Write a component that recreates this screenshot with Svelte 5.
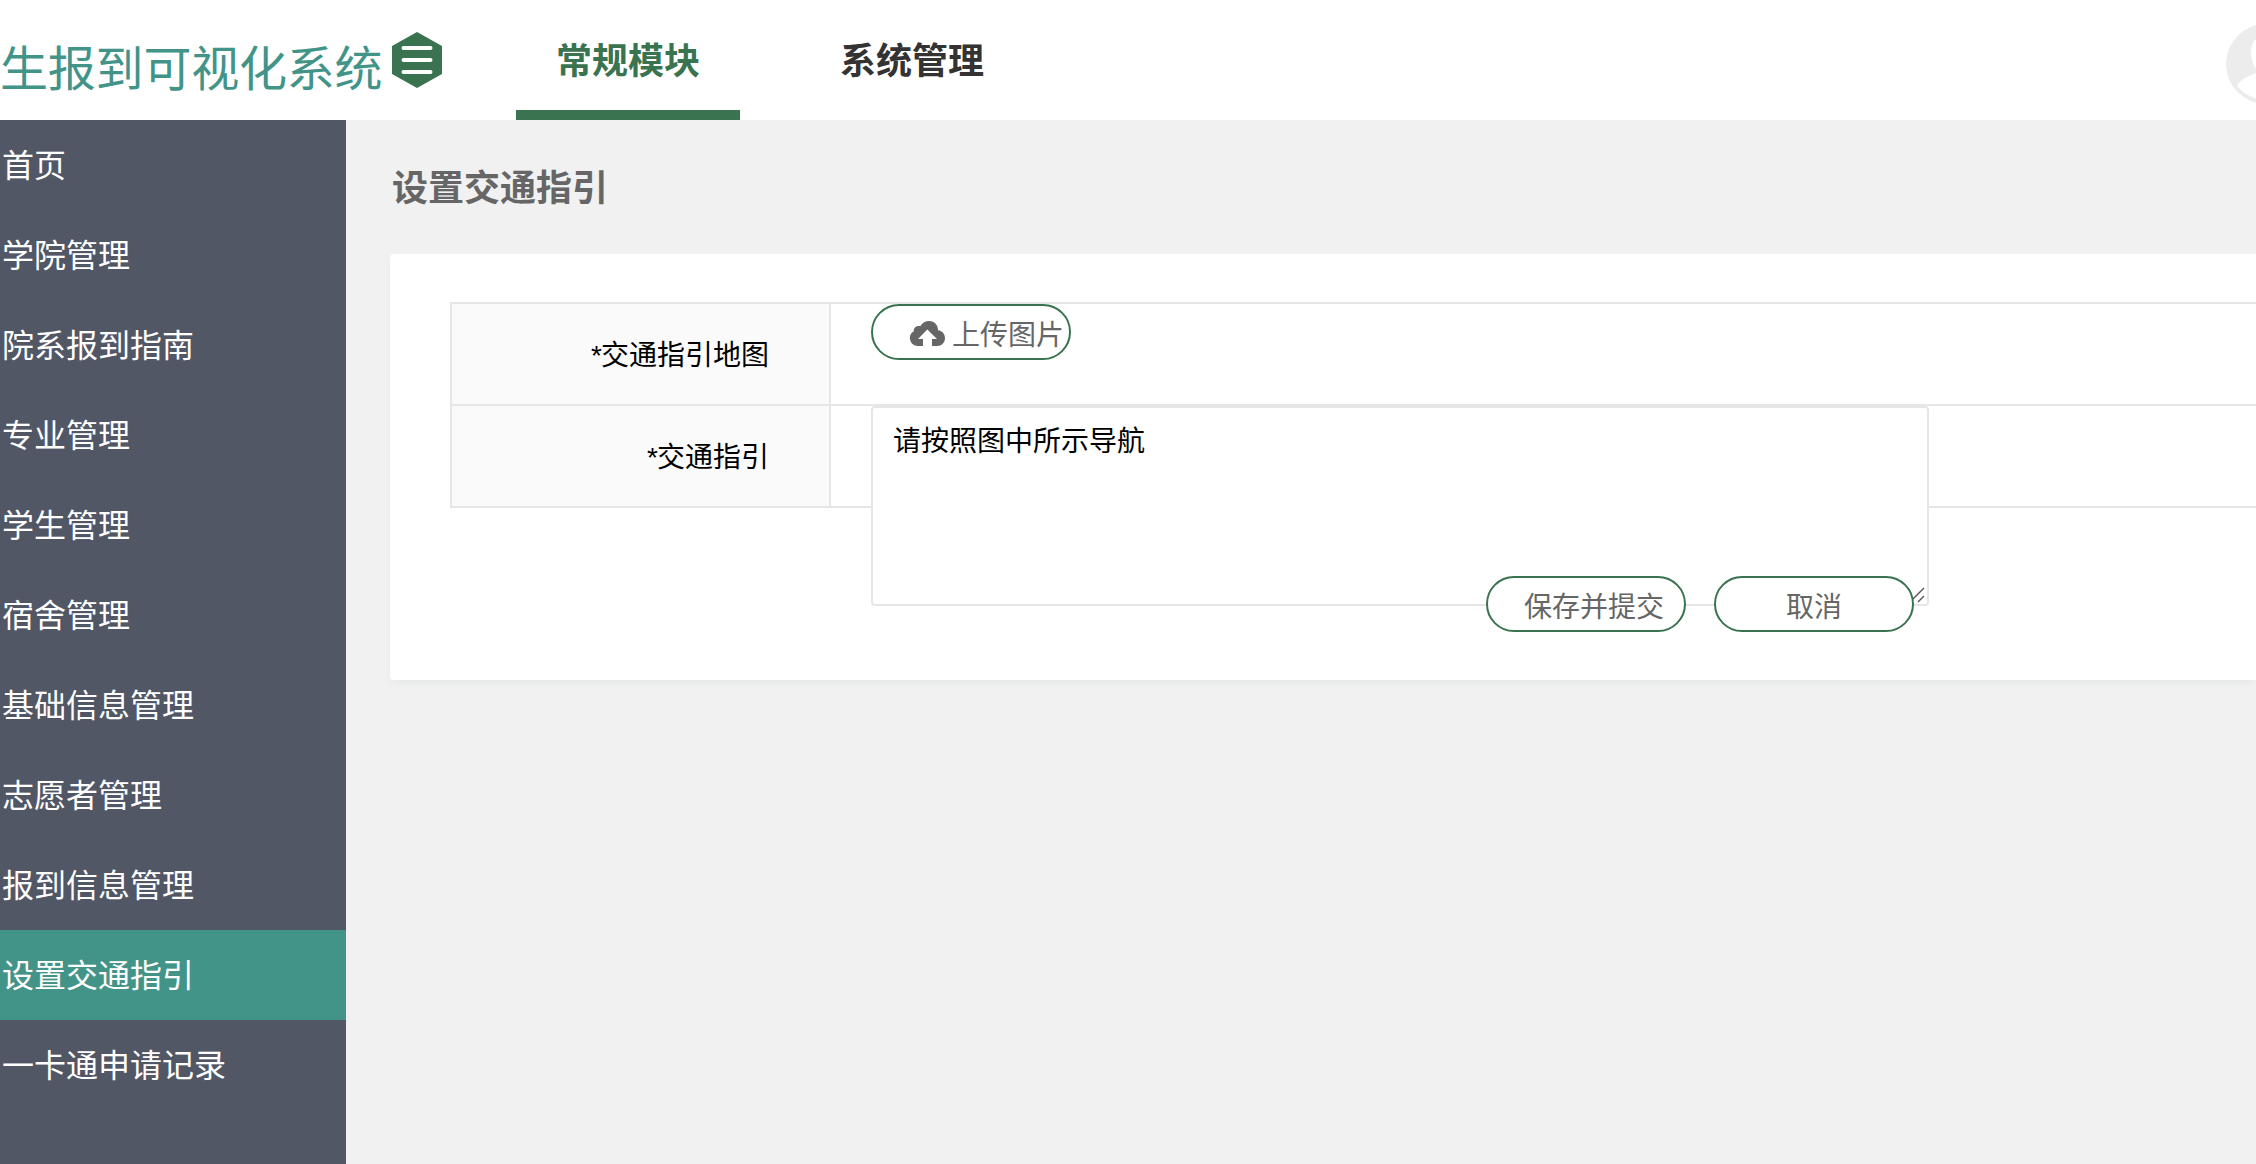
<script lang="ts">
  interface MenuItem {
    name: string;
    active?: boolean;
  }

  const modules: MenuItem[] = [
    { name: '常规模块', active: true },
    { name: '系统管理' },
  ];

  const menus: MenuItem[] = [
    { name: '首页' },
    { name: '学院管理' },
    { name: '院系报到指南' },
    { name: '专业管理' },
    { name: '学生管理' },
    { name: '宿舍管理' },
    { name: '基础信息管理' },
    { name: '志愿者管理' },
    { name: '报到信息管理' },
    { name: '设置交通指引', active: true },
    { name: '一卡通申请记录' },
  ];

  let guide = $state('请按照图中所示导航');
</script>

<div class="layout">
  <header>
    <div class="logo">生报到可视化系统</div>
    <svg class="toggle" viewBox="0 0 50 56" width="50" height="56">
      <path d="M25 0 L50 14 V42 L25 56 L0 42 V14 Z" fill="#3a7350" />
      <path d="M11.5 16 H38.5 M11.5 28 H38.5 M11.5 40 H38.5" stroke="#fff" stroke-width="4" stroke-linecap="round" />
    </svg>
    <nav>
      {#each modules as item}
        <div class="module" class:active={item.active}>{item.name}</div>
      {/each}
    </nav>
    <svg class="avatar" viewBox="0 0 80 80" width="80" height="80">
      <circle cx="40" cy="40" r="40" fill="#ececec" />
      <path d="M11 62 C15 54 24 52 32 48 C28 43 25 36 25 28 C25 18 31 11 40 11 C49 11 55 18 55 28 C55 36 52 43 48 48 C56 52 65 54 69 62 A37.5 37.5 0 0 1 11 62 Z" fill="#fff" />
    </svg>
  </header>

  <div class="body">
    <aside>
      {#each menus as item}
        <div class="menu" class:active={item.active}>{item.name}</div>
      {/each}
    </aside>

    <main>
      <h2>设置交通指引</h2>
      <section class="card">
        <div class="table">
          <div class="row">
            <div class="label"><span class="star">*</span>交通指引地图</div>
            <div class="value">
              <button class="btn">
                <svg class="cloud" viewBox="0 0 36 25" width="36" height="25">
                  <path d="M8 25 A8 8 0 0 1 4.8 10.2 C4.4 6.4 8 4.3 11.2 5.2 C13.2 1.8 16.5 0 20.2 0 C25.4 0 29 4 29 9.2 C33.2 9.8 36 12.8 36 17 C36 21.6 32.6 25 28 25 H23 V18 H28 L18.3 8.5 L9 18 H14 V25 Z" fill="#666" />
                </svg>
                上传图片
              </button>
            </div>
          </div>
          <div class="row">
            <div class="label"><span class="star">*</span>交通指引</div>
            <div class="value">
              <div class="editor">
                <textarea bind:value={guide} spellcheck="false"></textarea>
                <svg class="grip" viewBox="0 0 14 16" width="14" height="16">
                  <path d="M0 13 L12 1 M6 15 L12 9" stroke="#555" stroke-width="1.4" fill="none" />
                </svg>
              </div>
            </div>
          </div>
        </div>
        <div class="actions">
          <button class="btn">保存并提交</button>
          <button class="btn cancel">取消</button>
        </div>
      </section>
    </main>
  </div>
</div>

<style>
  :global(body) {
    margin: 0;
    overflow: hidden;
    font-family: "Noto Sans CJK SC", sans-serif;
  }

  .layout {
    display: flex;
    flex-direction: column;
    width: 100vw;
    height: 100vh;
    overflow: hidden;
    background: #f1f1f1;
  }

  header {
    display: flex;
    flex: none;
    height: 120px;
    background: #fff;
  }

  .logo {
    flex: none;
    width: 392px;
    font-size: 48px;
    line-height: 130px;
    letter-spacing: -0.2px;
    color: #439488;
    white-space: nowrap;
  }

  .toggle {
    flex: none;
    margin-top: 32px;
  }

  nav {
    display: flex;
    flex: 1;
    gap: 60px;
    margin-left: 74px;
  }

  .module {
    box-sizing: border-box;
    width: 224px;
    height: 120px;
    font-size: 36px;
    font-weight: bold;
    line-height: 117px;
    text-align: center;
    color: #333;
  }

  .module.active {
    color: #3a7350;
    border-bottom: 10px solid #3a7350;
  }

  .avatar {
    flex: none;
    margin: 24px -50px 0 0;
  }

  .body {
    display: flex;
    flex: 1;
    min-height: 0;
  }

  aside {
    flex: none;
    width: 346px;
    background: #525766;
  }

  .menu {
    box-sizing: border-box;
    height: 90px;
    padding-left: 2px;
    font-size: 32px;
    line-height: 86px;
    color: #fff;
  }

  .menu.active {
    background: #439488;
  }

  main {
    flex: 1;
    min-width: 0;
    padding-left: 44px;
  }

  h2 {
    margin: 0;
    padding-left: 2px;
    height: 134px;
    font-size: 36px;
    line-height: 131px;
    color: #666;
  }

  .card {
    box-sizing: border-box;
    height: 426px;
    padding: 48px 0 0 60px;
    border-radius: 4px 0 0 4px;
    background: #fff;
    box-shadow: 0 4px 8px -2px rgba(0, 80, 60, 0.06);
  }

  .table {
    border: 2px solid #e6e6e6;
    border-right: none;
  }

  .row {
    display: flex;
    height: 100px;
  }

  .row + .row {
    border-top: 2px solid #e6e6e6;
  }

  .label {
    box-sizing: border-box;
    flex: none;
    width: 379px;
    padding-right: 60px;
    border-right: 2px solid #e6e6e6;
    background: #fafafa;
    font-size: 28px;
    line-height: 98px;
    text-align: right;
    color: #000;
  }

  .star {
    margin-right: -1px;
    font-family: "Liberation Sans", sans-serif;
  }

  .value {
    padding-left: 40px;
  }

  .btn {
    display: flex;
    align-items: center;
    box-sizing: border-box;
    width: 200px;
    height: 56px;
    padding: 2px 0 0 36px;
    border: 2px solid #3a7350;
    border-radius: 28px;
    background: #fff;
    font-family: inherit;
    font-size: 28px;
    color: #666;
    white-space: nowrap;
  }

  .cloud {
    flex: none;
    margin-right: 7px;
  }

  .cancel {
    justify-content: center;
    padding: 2px 0 0;
  }

  .editor {
    position: relative;
    width: 1058px;
    height: 200px;
  }

  textarea {
    display: block;
    box-sizing: border-box;
    width: 100%;
    height: 100%;
    padding: 10px 20px;
    border: 2px solid #e6e6e6;
    border-radius: 4px;
    background: #fff;
    font-family: inherit;
    font-size: 28px;
    line-height: 42px;
    color: #000;
    resize: none;
    outline: none;
  }

  .grip {
    position: absolute;
    right: 3px;
    bottom: 3px;
  }

  /* the buttons sit on top of the textarea's lower edge */
  .actions {
    position: relative;
    display: flex;
    gap: 28px;
    margin-top: 68px;
    padding-left: 1036px;
  }
</style>
